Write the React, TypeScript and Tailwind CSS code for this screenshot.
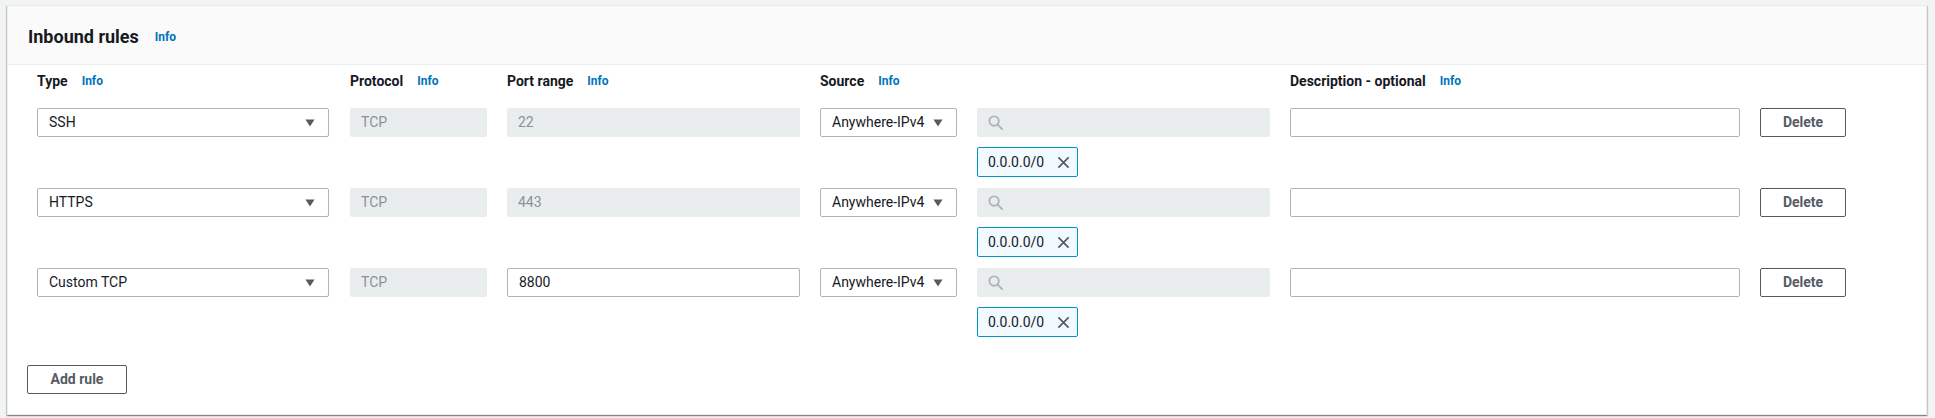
import React from "react";

const font = { fontFamily: "Roboto, 'Liberation Sans', Arial, sans-serif" };

type Rule = { type: string; port: string; portEditable: boolean };

const rules: Rule[] = [
  { type: "SSH", port: "22", portEditable: false },
  { type: "HTTPS", port: "443", portEditable: false },
  { type: "Custom TCP", port: "8800", portEditable: true },
];

function Info() {
  return <span className="ml-3.5 text-[12px] font-bold text-[#0073bb]">Info</span>;
}

function Caret() {
  return (
    <svg width="10" height="8" viewBox="0 0 10 8" className="shrink-0">
      <path d="M0.5 0.5h9L5 7.5z" fill="#545b64" />
    </svg>
  );
}

function SearchIcon() {
  return (
    <svg width="15" height="15" viewBox="0 0 16 16" fill="none" stroke="#aab7b8" strokeWidth="2">
      <circle cx="6.5" cy="6.5" r="5" />
      <path d="M10.2 10.2L15 15" strokeLinecap="round" />
    </svg>
  );
}

function CloseIcon() {
  return (
    <svg width="13" height="13" viewBox="0 0 14 14" fill="none" stroke="#545b64" strokeWidth="1.8">
      <path d="M1.5 1.5l11 11M12.5 1.5l-11 11" />
    </svg>
  );
}

function Select({ value, width }: { value: string; width: string }) {
  return (
    <div
      className={`${width} h-[29px] flex items-center justify-between border border-[#aab7b8] rounded-[2px] bg-white pl-[11px] pr-[13px] text-[14px] text-[#16191f]`}
    >
      <span>{value}</span>
      <Caret />
    </div>
  );
}

function DisabledInput({ value, width }: { value: string; width: string }) {
  return (
    <div className={`${width} h-[29px] flex items-center rounded-[2px] bg-[#eaeded] pl-[11px] text-[14px] text-[#879596]`}>
      {value}
    </div>
  );
}

function RuleRow({ rule }: { rule: Rule }) {
  return (
    <div className="flex items-start">
      <Select value={rule.type} width="w-[292px]" />
      <div className="ml-[21px]">
        <DisabledInput value="TCP" width="w-[137px]" />
      </div>
      <div className="ml-5">
        {rule.portEditable ? (
          <div className="w-[293px] h-[29px] flex items-center border border-[#aab7b8] rounded-[2px] bg-white pl-[11px] text-[14px] text-[#16191f]">
            {rule.port}
          </div>
        ) : (
          <DisabledInput value={rule.port} width="w-[293px]" />
        )}
      </div>
      <div className="ml-5">
        <Select value="Anywhere-IPv4" width="w-[137px]" />
      </div>
      <div className="ml-5 w-[293px] flex flex-col">
        <div className="h-[29px] flex items-center rounded-[2px] bg-[#eaeded] pl-[11px]">
          <SearchIcon />
        </div>
        <div className="mt-[10px] w-[101px] h-[30px] flex items-center justify-between border border-[#0095c8] rounded-[2px] bg-[#f1faff] pl-[10px] pr-[7px] text-[14px] text-[#16191f]">
          <span>0.0.0.0/0</span>
          <CloseIcon />
        </div>
      </div>
      <div className="ml-5 w-[450px] h-[29px] border border-[#aab7b8] rounded-[2px] bg-white" />
      <button className="ml-5 w-[86px] h-[29px] border border-[#545b64] rounded-[2px] bg-white text-[14px] font-bold text-[#545b64]">
        Delete
      </button>
    </div>
  );
}

export default function App() {
  return (
    <div className="min-h-screen bg-[#f2f3f3] pt-[5px] pl-[7px] pr-[8px]" style={font}>
      <div className="bg-white border border-[#eaeded] shadow-[0_1px_1px_0_rgba(0,28,36,0.3),1px_1px_1px_0_rgba(0,28,36,0.15),-1px_1px_1px_0_rgba(0,28,36,0.15)]">
        {/* Header */}
        <div className="h-[59px] flex items-center bg-[#fafafa] border-b border-[#eaeded] pl-5 pt-[3px]">
          <h2 className="text-[18px] font-bold text-[#16191f]">Inbound rules</h2>
          <span className="ml-4 text-[12px] font-bold text-[#0073bb]">Info</span>
        </div>

        {/* Body */}
        <div className="pl-[19px] pt-[6px] pb-[20px]">
          <div className="pl-[10px] flex h-5 items-center text-[14px] font-bold text-[#16191f]">
            <div className="w-[292px] flex items-center">
              Type <Info />
            </div>
            <div className="ml-[21px] w-[137px] flex items-center">
              Protocol <Info />
            </div>
            <div className="ml-5 w-[293px] flex items-center">
              Port range <Info />
            </div>
            <div className="ml-5 w-[137px] flex items-center">
              Source <Info />
            </div>
            <div className="ml-5 w-[293px]" />
            <div className="ml-5 w-[450px] flex items-center">
              Description - optional <Info />
            </div>
          </div>

          <div className="pl-[10px] mt-[17px] flex flex-col gap-[11px]">
            {rules.map((r) => (
              <RuleRow key={r.type} rule={r} />
            ))}
          </div>

          <button className="mt-[28px] w-[100px] h-[29px] border border-[#545b64] rounded-[2px] bg-white text-[14px] font-bold text-[#545b64]">
            Add rule
          </button>
        </div>
      </div>
    </div>
  );
}
